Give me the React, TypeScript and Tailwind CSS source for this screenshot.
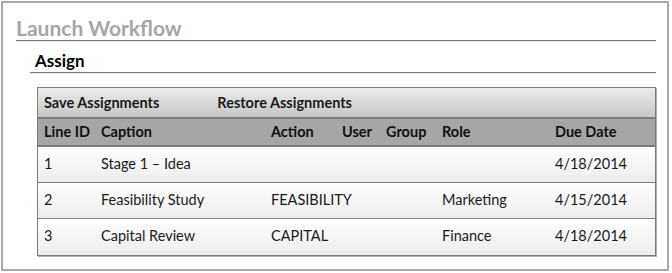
import React from "react";

const rows = [
  { id: "1", caption: "Stage 1 – Idea", action: "", user: "", group: "", role: "", due: "4/18/2014" },
  { id: "2", caption: "Feasibility Study", action: "FEASIBILITY", user: "", group: "", role: "Marketing", due: "4/15/2014" },
  { id: "3", caption: "Capital Review", action: "CAPITAL", user: "", group: "", role: "Finance", due: "4/18/2014" },
];

const cols = "grid grid-cols-[57px_170px_71px_44px_56px_113px_1fr]";

export default function App() {
  return (
    <div className="w-[672px] h-[273px] bg-white" style={{ fontFamily: "Lato, 'Open Sans', sans-serif" }}>
      <div className="ml-[1px] mt-[1px] w-[668px] h-[270px] border-2 border-[#a8a8a8] pl-[13px] pr-[11px]">
        <div className="pt-[13px] text-[21px] leading-[24px] font-bold text-[#a6a6a6]">Launch Workflow</div>
        <div className="h-[1px] bg-[#7a7a7a]" />
        <div className="h-[1px] bg-[#e6e6e6]" />
        <div className="pl-[14px]">
          <div className="pt-[8px] pl-[5px] text-[17px] leading-[21px] font-bold text-black">Assign</div>
          <div className="h-[1px] bg-[#7a7a7a] mt-[1px]" />
          <div className="h-[1px] bg-[#ececec]" />
          <div className="ml-[7px] mt-[13px] border border-[#7a7a7a] shadow-[1px_1px_0_#b0b0b0] text-[14.5px] text-[#1a1a1a]">
            <div className="h-[31px] flex items-center gap-[58px] pl-[6px] font-bold bg-gradient-to-b from-[#ececec] to-[#c6c6c6] border-b-2 border-[#7e7e7e]">
              <span>Save Assignments</span>
              <span>Restore Assignments</span>
            </div>
            <div className={`${cols} h-[28px] items-center pl-[6px] font-bold bg-[#a6a6a6] border-b-2 border-[#7a7a7a] text-[#111]`}>
              <span>Line ID</span>
              <span>Caption</span>
              <span>Action</span>
              <span>User</span>
              <span>Group</span>
              <span>Role</span>
              <span>Due Date</span>
            </div>
            {rows.map((r, i) => (
              <div
                key={r.id}
                className={`${cols} h-[36px] items-center pl-[6px] pb-[2px] bg-gradient-to-b from-white to-[#ececec] ${i < rows.length - 1 ? "border-b border-[#808080]" : ""}`}
              >
                <span>{r.id}</span>
                <span>{r.caption}</span>
                <span>{r.action}</span>
                <span>{r.user}</span>
                <span>{r.group}</span>
                <span>{r.role}</span>
                <span>{r.due}</span>
              </div>
            ))}
          </div>
        </div>
      </div>
    </div>
  );
}
